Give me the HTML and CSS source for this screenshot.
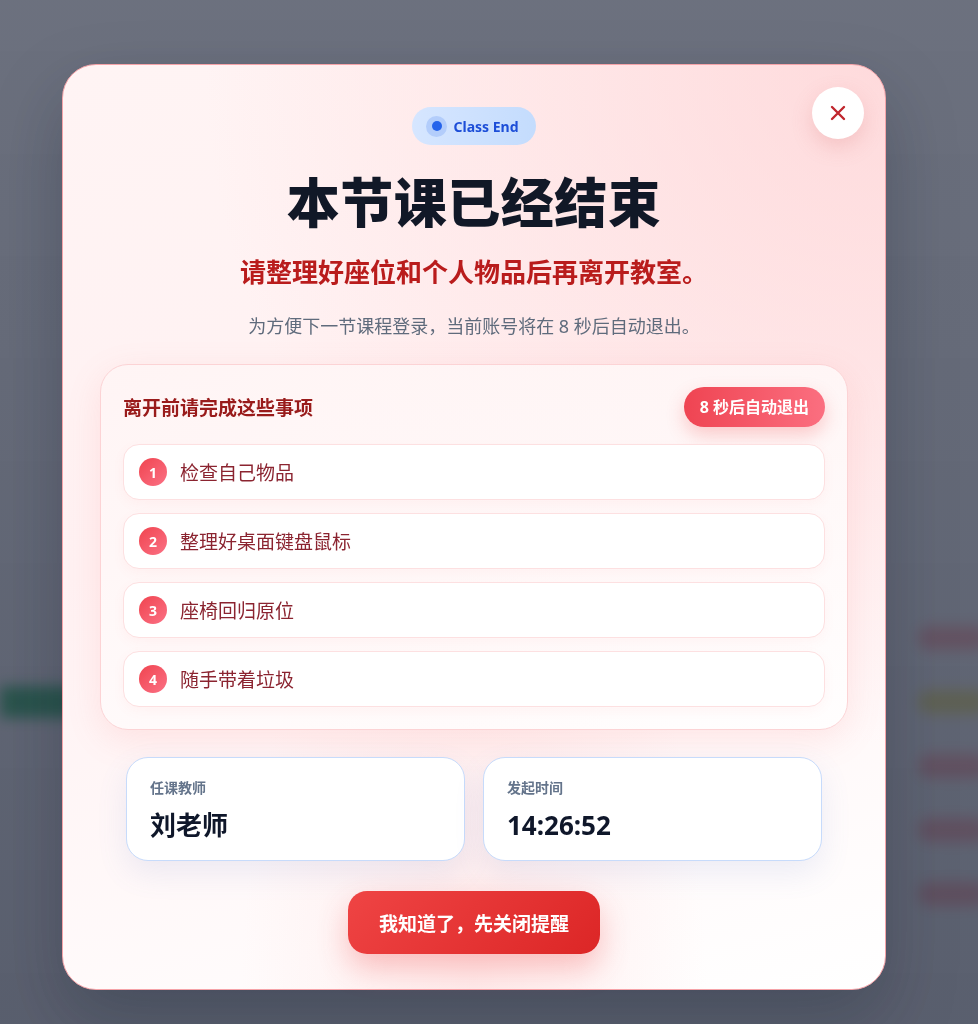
FILE: index.html
```html
<!DOCTYPE html>
<html lang="zh-CN">
<head>
    <meta charset="UTF-8">
    <meta name="viewport" content="width=device-width, initial-scale=1.0">
    <title>下课提醒</title>
    <link rel="stylesheet" href="styles.css">
</head>
<body>
    <!-- page behind the overlay, blurred -->
    <div class="page">
        <div class="page-row"><span></span><span class="pill red"></span></div>
        <div class="page-row"><span class="bar green"></span><span class="pill yellow"></span></div>
        <div class="page-row"><span></span><span class="pill red"></span></div>
        <div class="page-row"><span></span><span class="pill red"></span></div>
        <div class="page-row"><span></span><span class="pill red"></span></div>
    </div>

    <div class="overlay">
        <div class="modal">
            <button class="close-btn" aria-label="关闭">
                <svg width="20" height="20" viewBox="0 0 20 20">
                    <path d="M4 4 L16 16 M16 4 L4 16" stroke="#c0262d" stroke-width="2.4" stroke-linecap="round"/>
                </svg>
            </button>

            <div class="badge"><span class="badge-dot"></span>Class End</div>
            <h1>本节课已经结束</h1>
            <p class="subtitle">请整理好座位和个人物品后再离开教室。</p>
            <p class="note">为方便下一节课程登录，当前账号将在 8 秒后自动退出。</p>

            <section class="checklist">
                <div class="checklist-head">
                    <h2>离开前请完成这些事项</h2>
                    <span class="countdown">8 秒后自动退出</span>
                </div>
                <ul>
                    <li><span class="num">1</span>检查自己物品</li>
                    <li><span class="num">2</span>整理好桌面键盘鼠标</li>
                    <li><span class="num">3</span>座椅回归原位</li>
                    <li><span class="num">4</span>随手带着垃圾</li>
                </ul>
            </section>

            <div class="info-row">
                <div class="info-card">
                    <span class="info-label">任课教师</span>
                    <span class="info-value">刘老师</span>
                </div>
                <div class="info-card">
                    <span class="info-label">发起时间</span>
                    <span class="info-value">14:26:52</span>
                </div>
            </div>

            <button class="confirm-btn">我知道了，先关闭提醒</button>
        </div>
    </div>
</body>
</html>
```

FILE: styles.css
```css
* {
    margin: 0;
    padding: 0;
    box-sizing: border-box;
}

body {
    font-family: "Noto Sans", "Noto Sans CJK SC", sans-serif;
    background-color: #eef1f5;
    height: 1024px;
    overflow: hidden;
}

/* blurred page behind */
.page {
    padding-top: 625px;
    display: flex;
    flex-direction: column;
    gap: 38px;
    filter: blur(7px);
}

.page-row {
    display: flex;
    justify-content: space-between;
    align-items: center;
    height: 26px;
}

.pill {
    width: 70px;
    height: 24px;
    border-radius: 12px;
    margin-right: -10px;
}

.bar {
    width: 80px;
    height: 32px;
}

.red { background: #f8a0a8; }
.yellow { background: #e8e070; }
.green { background: #0aa850; }

.overlay {
    position: fixed;
    inset: 0;
    background: linear-gradient(180deg, rgba(62, 67, 84, 0.74), rgba(48, 54, 72, 0.78));
    padding: 64px 0 0 62px;
}

.modal {
    position: relative;
    width: 824px;
    height: 926px;
    border: 1px solid #f5a3a8;
    border-radius: 34px;
    padding: 42px 37px 0;
    text-align: center;
    background:
        radial-gradient(circle at 100% 0%, rgba(254, 210, 212, 0.75), rgba(254, 215, 218, 0) 55%),
        radial-gradient(ellipse at 50% 100%, rgba(254, 226, 226, 0.6), rgba(255, 255, 255, 0) 40%),
        linear-gradient(165deg, #fff4f4 0%, #fff1f2 45%, #ffffff 100%);
    box-shadow: 0 30px 70px rgba(15, 23, 42, 0.25);
}

.close-btn {
    position: absolute;
    top: 22px;
    right: 21px;
    width: 52px;
    height: 52px;
    border: none;
    border-radius: 50%;
    background: #fff;
    display: flex;
    align-items: center;
    justify-content: center;
    box-shadow: 0 8px 20px rgba(220, 120, 120, 0.25);
    cursor: pointer;
}

.badge {
    display: inline-flex;
    align-items: center;
    gap: 6px;
    height: 38px;
    padding: 0 17px 0 14px;
    border-radius: 19px;
    background: linear-gradient(90deg, #d6e6ff, #c4dcfd);
    color: #1d4ed8;
    font-size: 14px;
    font-weight: 700;
}

.badge-dot {
    width: 21px;
    height: 21px;
    border-radius: 50%;
    background: #b3cdfb;
    display: flex;
    align-items: center;
    justify-content: center;
}

.badge-dot::after {
    content: "";
    width: 10px;
    height: 10px;
    border-radius: 50%;
    background: #2563eb;
}

h1 {
    margin-top: 20px;
    font-size: 53px;
    line-height: 76px;
    font-weight: 900;
    color: #111827;
    letter-spacing: 0.5px;
}

.subtitle {
    margin-top: 14px;
    font-size: 26px;
    line-height: 34px;
    font-weight: 700;
    color: #b91c1c;
}

.note {
    margin-top: 24px;
    font-size: 18px;
    line-height: 26px;
    color: #5f6b7c;
}

.checklist {
    margin-top: 25px;
    padding: 22px 22px 22px;
    border: 1px solid #fcd3d5;
    border-radius: 28px;
    background: linear-gradient(160deg, rgba(255, 245, 245, 0.8), rgba(255, 255, 255, 0.85));
    box-shadow: 0 10px 35px rgba(248, 113, 113, 0.14);
    text-align: left;
}

.checklist-head {
    display: flex;
    justify-content: space-between;
    align-items: center;
    margin-bottom: 17px;
}

.checklist-head h2 {
    font-size: 19px;
    font-weight: 700;
    color: #991b1b;
}

.countdown {
    height: 40px;
    line-height: 40px;
    padding: 0 16px;
    border-radius: 20px;
    background: linear-gradient(90deg, #ef4452, #fb6f80);
    color: #fff;
    font-size: 16px;
    font-weight: 700;
    box-shadow: 0 8px 18px rgba(239, 68, 68, 0.25);
}

.checklist ul {
    list-style: none;
    display: flex;
    flex-direction: column;
    gap: 13px;
}

.checklist li {
    display: flex;
    align-items: center;
    gap: 13px;
    height: 56px;
    padding: 0 15px;
    background: #fff;
    border: 1px solid #fde0e1;
    border-radius: 16px;
    font-size: 19px;
    color: #8b2430;
    box-shadow: 0 4px 12px rgba(248, 113, 113, 0.06);
}

.num {
    width: 28px;
    height: 28px;
    border-radius: 50%;
    background: linear-gradient(135deg, #f0444f, #fb7185);
    color: #fff;
    font-size: 14px;
    font-weight: 700;
    display: flex;
    align-items: center;
    justify-content: center;
}

.info-row {
    display: flex;
    gap: 18px;
    margin: 27px 26px 0;
    text-align: left;
}

.info-card {
    flex: 1;
    height: 104px;
    padding: 20px 23px;
    background: #fff;
    border: 1px solid #c7dbfb;
    border-radius: 22px;
    box-shadow: 0 12px 30px rgba(96, 120, 200, 0.12);
    display: flex;
    flex-direction: column;
    gap: 10px;
}

.info-label {
    font-size: 14px;
    line-height: 20px;
    font-weight: 700;
    color: #64748b;
}

.info-value {
    font-size: 26px;
    line-height: 34px;
    font-weight: 700;
    color: #0f172a;
}

.confirm-btn {
    margin-top: 30px;
    width: 252px;
    height: 63px;
    border: none;
    border-radius: 19px;
    background: linear-gradient(135deg, #ef4444, #dc2626);
    color: #fff;
    font-family: inherit;
    font-size: 19px;
    font-weight: 700;
    box-shadow: 0 14px 30px rgba(239, 68, 68, 0.3);
    cursor: pointer;
}
```
